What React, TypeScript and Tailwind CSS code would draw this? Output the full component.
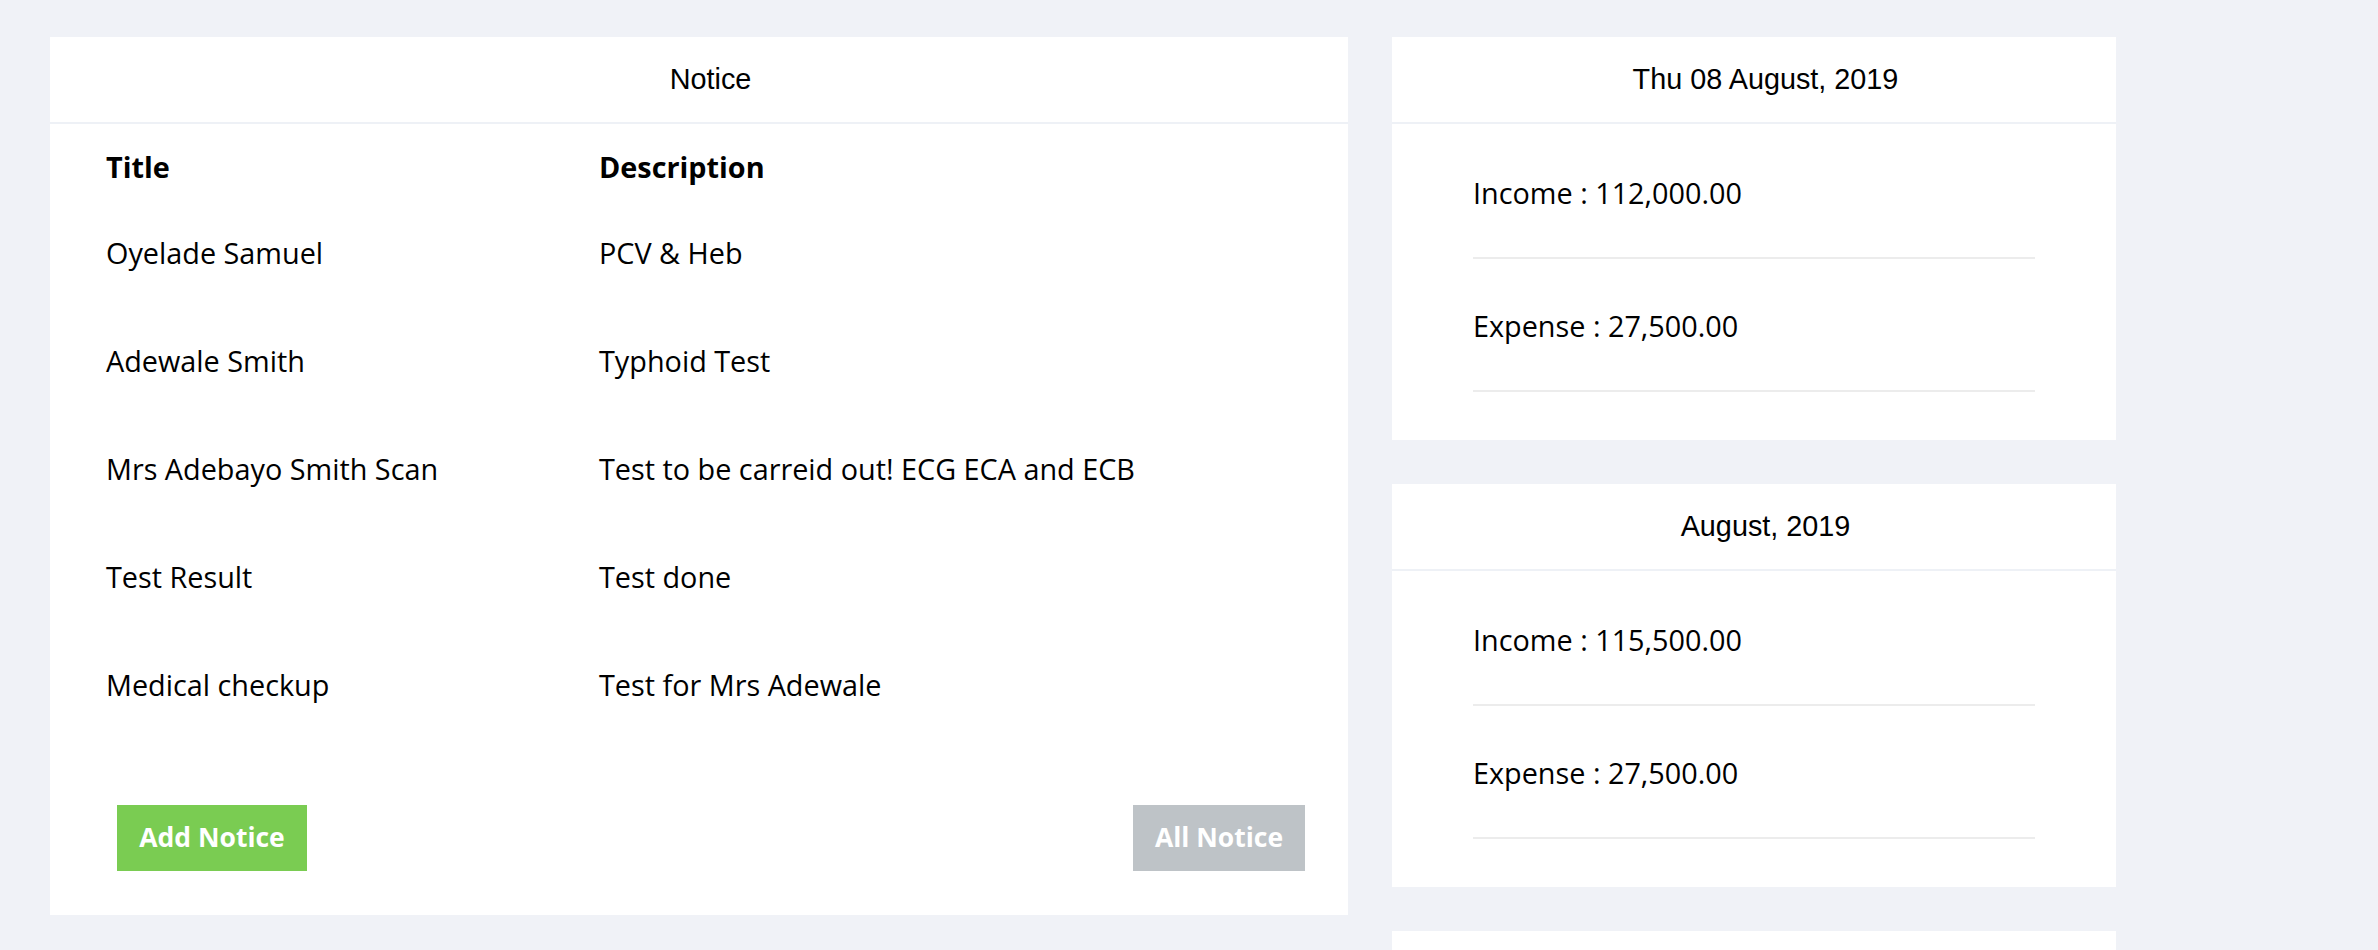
const notices = [
  { title: "Oyelade Samuel", description: "PCV & Heb" },
  { title: "Adewale Smith", description: "Typhoid Test" },
  { title: "Mrs Adebayo Smith Scan", description: "Test to be carreid out! ECG ECA and ECB" },
  { title: "Test Result", description: "Test done" },
  { title: "Medical checkup", description: "Test for Mrs Adewale" },
];

const summaries = [
  { label: "Thu 08 August, 2019", income: "112,000.00", expense: "27,500.00" },
  { label: "August, 2019", income: "115,500.00", expense: "27,500.00" },
];

export default function App() {
  return (
    <div className="min-h-screen bg-[#f0f2f7] pt-[37px] pl-[50px] font-['Open_Sans',sans-serif] text-black">
      <div className="flex items-start gap-[44px]">
        {/* notice board */}
        <div className="w-[1298px] bg-white">
          <CardHeader label="Notice" />
          <div className="pt-[23px]">
            <div className="grid grid-cols-[493px_1fr] px-[56px] pb-[12px] text-[28.8px] leading-[40px] font-bold">
              <div>Title</div>
              <div>Description</div>
            </div>
            {notices.map(n => (
              <div key={n.title} className="grid grid-cols-[493px_1fr] px-[56px] py-[34px] text-[28.8px] leading-[40px]">
                <div>{n.title}</div>
                <div>{n.description}</div>
              </div>
            ))}
          </div>
          <div className="flex items-center justify-between pl-[67px] pr-[43px] pt-[66px] pb-[44px]">
            <button className="h-[66px] w-[190px] bg-[#7acc52] text-[26.5px] font-bold text-white">Add Notice</button>
            <button className="h-[66px] w-[172px] bg-[#bec3c7] text-[26.5px] font-bold text-white">All Notice</button>
          </div>
        </div>

        {/* income / expense summaries */}
        <div className="flex w-[724px] flex-col gap-[44px]">
          {summaries.map(s => (
            <div key={s.label} className="bg-white">
              <CardHeader label={s.label} />
              <div className="px-[81px] pt-[2px] pb-[48px]">
                <SummaryRow text={`Income : ${s.income}`} />
                <SummaryRow text={`Expense : ${s.expense}`} />
              </div>
            </div>
          ))}
          {/* next card, only its top edge is in view */}
          <div className="h-[40px] bg-white" />
        </div>
      </div>
    </div>
  );
}

function CardHeader({ label }: { label: string }) {
  return (
    <div className="flex h-[87px] items-center justify-center border-b-2 border-[#eef1f6] pl-[23px] font-['Liberation_Sans',Arial,sans-serif] text-[28.8px]">
      {label}
    </div>
  );
}

function SummaryRow({ text }: { text: string }) {
  return (
    <div className="border-b-2 border-[#ececec] pt-[47px] pb-[44px] text-[28.8px] leading-[40px]">
      {text}
    </div>
  );
}
